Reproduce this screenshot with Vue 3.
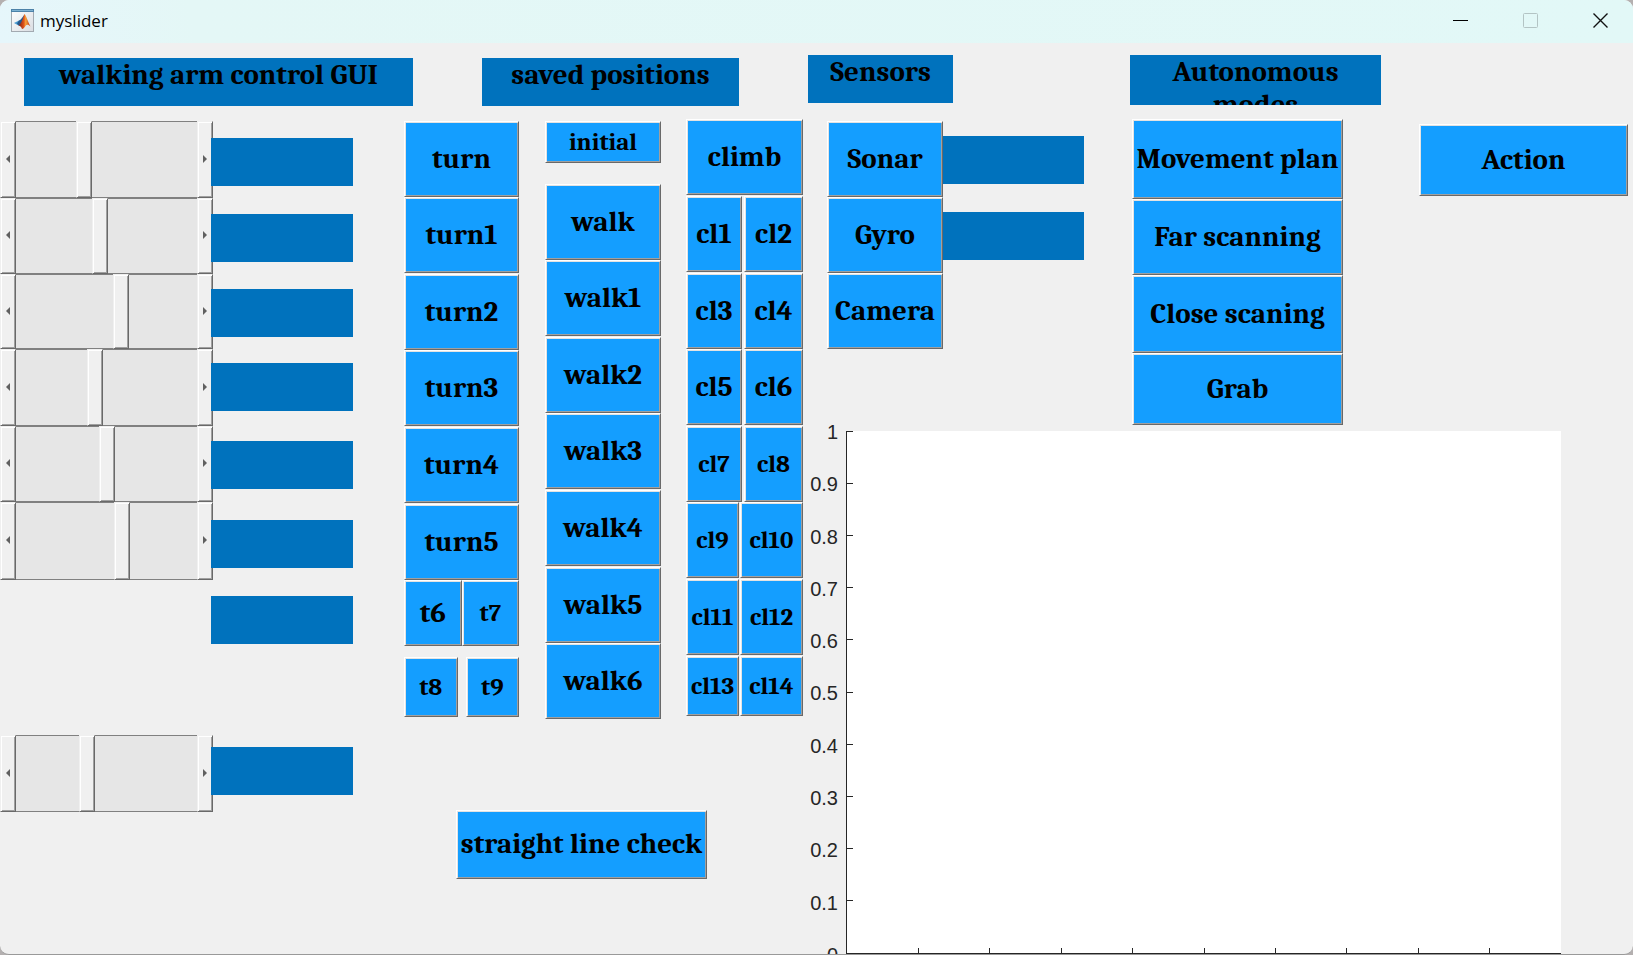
<script setup>
import { reactive } from 'vue'

const sliders = reactive([
  { name: 'Joint 1', value: 0.364 },
  { name: 'Joint 2', value: 0.461 },
  { name: 'Joint 3', value: 0.588 },
  { name: 'Joint 4', value: 0.43 },
  { name: 'Joint 5', value: 0.503 },
  { name: 'Joint 6', value: 0.594 },
  { name: 'Joint 7', value: 0.382 },
])

function nudge(slider, amount) {
  slider.value = Math.min(1, Math.max(0, slider.value + amount))
}

const turns = ['turn', 'turn1', 'turn2', 'turn3', 'turn4', 'turn5']
const walks = ['walk', 'walk1', 'walk2', 'walk3', 'walk4', 'walk5', 'walk6']
const climbs = [
  { left: 'cl1', right: 'cl2', kind: 'wide' },
  { left: 'cl3', right: 'cl4', kind: 'wide' },
  { left: 'cl5', right: 'cl6', kind: 'wide' },
  { left: 'cl7', right: 'cl8', kind: 'wide small' },
  { left: 'cl9', right: 'cl10', kind: 'narrow small' },
  { left: 'cl11', right: 'cl12', kind: 'narrow small' },
  { left: 'cl13', right: 'cl14', kind: 'narrow small' },
]
const modes = ['Movement plan', 'Far scanning', 'Close scaning', 'Grab']
const yLabels = ['1', '0.9', '0.8', '0.7', '0.6', '0.5', '0.4', '0.3', '0.2', '0.1', '0']
</script>

<template>
  <div class="window">
    <header class="titlebar">
      <svg class="logo" viewBox="0 0 23 23" aria-hidden="true">
        <defs>
          <linearGradient id="flame" x1="0" y1="0" x2="1" y2="0">
            <stop offset="0" stop-color="#7c1d10" />
            <stop offset="0.45" stop-color="#e2541b" />
            <stop offset="0.6" stop-color="#f7a23a" />
            <stop offset="1" stop-color="#b92b12" />
          </linearGradient>
          <linearGradient id="paper" x1="0" y1="0" x2="1" y2="1">
            <stop offset="0" stop-color="#ffffff" />
            <stop offset="1" stop-color="#d9dde2" />
          </linearGradient>
        </defs>
        <rect x="0.5" y="0.5" width="22" height="22" fill="url(#paper)" stroke="#a3aab1" />
        <rect x="0" y="0" width="23" height="3" fill="#4d82a8" />
        <rect x="1" y="1" width="21" height="1" fill="#7fb2d2" />
        <path d="M3 14 L8 11.5 L10 13.5 L7.500 16.500 Z" fill="#4a9bd0" />
        <path d="M8 11.500 C10 11 11.500 8 13.500 5.500 L12.500 12 L9.500 15.500 L7.500 16.500 L6 14.500 Z" fill="#26588c" />
        <path d="M13.500 5 C15 6 17 13 19.500 17.500 C17.500 15.500 16 15 14.500 17 C13.500 18.500 12.500 20 11 20 C10.500 18 9.500 17 7.500 16.500 C11 14.500 12 8 13.500 5 Z" fill="url(#flame)" />
      </svg>
      <h1 class="caption">myslider</h1>
      <div class="controls">
        <button type="button" class="control" aria-label="Minimize">
          <svg viewBox="0 0 15 15"><path d="M0 7.500H15" stroke="#000" fill="none" /></svg>
        </button>
        <button type="button" class="control" aria-label="Maximize" disabled>
          <svg viewBox="0 0 15 15"><rect x="0.5" y="0.5" width="14" height="14" rx="1" stroke="#b3c4c4" fill="none" /></svg>
        </button>
        <button type="button" class="control" aria-label="Close">
          <svg viewBox="0 0 15 15"><path d="M0.500 0.500L14.500 14.500M14.500 0.500L0.500 14.500" stroke="#111" stroke-width="1.400" fill="none" /></svg>
        </button>
      </div>
    </header>

    <main class="figure">
      <section class="left">
        <div class="heads">
          <h2 class="head arm-head">walking arm control GUI</h2>
          <h2 class="head saved-head">saved positions</h2>
        </div>
        <div class="body">
          <div class="sliders">
            <div v-for="(s, i) in sliders" :key="s.name" class="slider" :class="{ last: i === 6 }">
              <button type="button" class="arrow" :aria-label="s.name + ' down'" @click="nudge(s, -0.01)">
                <svg viewBox="0 0 4 8"><path d="M4 0V8L0 4Z" fill="#606060" /></svg>
              </button>
              <input v-model.number="s.value" type="range" min="0" max="1" step="any" :aria-label="s.name" />
              <button type="button" class="arrow" :aria-label="s.name + ' up'" @click="nudge(s, 0.01)">
                <svg viewBox="0 0 4 8"><path d="M0 0V8L4 4Z" fill="#606060" /></svg>
              </button>
            </div>
          </div>
          <div class="readouts">
            <output v-for="n in 8" :key="n" class="field"></output>
          </div>
          <div class="positions">
            <div class="banks">
              <div class="turns">
                <button v-for="t in turns" :key="t" type="button" class="push">{{ t }}</button>
                <div class="pair joined">
                  <button type="button" class="push">t6</button>
                  <button type="button" class="push small">t7</button>
                </div>
                <div class="pair spaced">
                  <button type="button" class="push small">t8</button>
                  <button type="button" class="push small">t9</button>
                </div>
              </div>
              <div class="walks">
                <button type="button" class="push small initial">initial</button>
                <button v-for="w in walks" :key="w" type="button" class="push">{{ w }}</button>
              </div>
              <div class="climbs">
                <button type="button" class="push">climb</button>
                <div v-for="c in climbs" :key="c.left" class="climb-row" :class="c.kind">
                  <button type="button" class="push">{{ c.left }}</button>
                  <button type="button" class="push">{{ c.right }}</button>
                </div>
              </div>
            </div>
            <div class="check">
              <button type="button" class="push">straight line check</button>
            </div>
          </div>
        </div>
      </section>

      <section class="right">
        <div class="heads">
          <h2 class="head sensor-head">Sensors</h2>
          <h2 class="head auto-head">Autonomous modes</h2>
        </div>
        <div class="body">
          <div class="sensors">
            <button type="button" class="push">Sonar</button>
            <button type="button" class="push">Gyro</button>
            <button type="button" class="push">Camera</button>
          </div>
          <div class="sensor-fields">
            <output class="field"></output>
            <output class="field"></output>
          </div>
          <div class="modes">
            <button v-for="m in modes" :key="m" type="button" class="push">{{ m }}</button>
          </div>
          <div class="action">
            <button type="button" class="push">Action</button>
          </div>
        </div>
        <div class="chart">
          <ul class="y-labels">
            <li v-for="l in yLabels" :key="l">{{ l }}</li>
          </ul>
          <svg class="plot" aria-label="Empty axes">
            <line v-for="n in 10" :key="'y' + n" x1="0" x2="6" :y1="(n - 1) * 10 + '%'" :y2="(n - 1) * 10 + '%'" />
            <line v-for="n in 9" :key="'x' + n" :x1="n * 10 + '%'" :x2="n * 10 + '%'" y1="99%" y2="100%" />
          </svg>
        </div>
      </section>
    </main>
  </div>
</template>

<style>
html {
  background: #b4b0b0;
}
</style>

<style scoped>
.window {
  box-sizing: border-box;
  display: flex;
  flex-direction: column;
  height: 100vh;
  overflow: hidden;
  border-bottom: 1px solid #999;
  border-radius: 9px;
  background: #f0f0f0;
  color: #000;
}

.titlebar {
  display: flex;
  flex: none;
  align-items: center;
  height: 43px;
  box-sizing: border-box;
  padding: 0 0 2px 11px;
  background: linear-gradient(80deg, #e6f6fb 0%, #e4f7f6 12%, #e2f8f7 100%);
}

.logo {
  width: 23px;
  height: 23px;
}

.caption {
  margin: 0 auto 0 6px;
  font: 400 17px/24px "Open Sans", "Noto Sans", sans-serif;
}

.controls {
  display: flex;
  gap: 5px;
}

.control {
  display: flex;
  align-items: center;
  justify-content: center;
  width: 65px;
  height: 39px;
  padding: 0;
  border: 0;
  background: none;
}

.control svg {
  width: 15px;
  height: 15px;
}

.figure {
  display: grid;
  flex: 1;
  min-height: 0;
  grid-template-columns: minmax(0, 808fr) minmax(0, 825fr);
  font-family: Cambria, "Liberation Serif", serif;
}

.heads,
.body {
  display: grid;
}

.head {
  height: 48px;
  margin: 0;
  overflow: hidden;
  background: #0072bd;
  font-size: 29px;
  font-weight: 700;
  line-height: 33px;
  text-align: center;
}

.field {
  display: block;
  height: 48px;
  background: #0072bd;
}

.push {
  box-sizing: border-box;
  width: 100%;
  min-width: 0;
  height: 76px;
  padding: 0 0 2px;
  border: 1px solid;
  border-color: #fff #696969 #696969 #fff;
  background: #149eff;
  box-shadow: inset 1px 1px #e3e3e3, inset -1px -1px #a0a0a0;
  color: #000;
  font: 700 29px/33px Cambria, "Liberation Serif", serif;
  white-space: nowrap;
}

.small,
.small .push {
  font-size: 25px;
}

.left .heads {
  grid-template-columns: 24fr 389fr 69fr 257fr 69fr;
  padding: 15px 0 13px;
}

.arm-head {
  grid-column: 2;
}

.saved-head {
  grid-column: 4;
}

.left .body {
  grid-template-columns: 211fr 2fr 140fr 51fr 399fr 5fr;
  align-items: start;
}

.sliders {
  display: grid;
  grid-row: 1;
  grid-column: 1 / 3;
  grid-template-rows: 77px 76px 75px 77px 76px 78px 155px 77px;
  padding-top: 2px;
}

.slider {
  display: grid;
  grid-template-columns: 16px minmax(0, 1fr) 16px;
}

.slider.last {
  grid-row: 8;
}

.arrow {
  display: flex;
  align-items: center;
  justify-content: center;
  padding: 0 0 2px;
  border: 1px solid;
  border-color: #f0f0f0 #696969 #696969 #f0f0f0;
  background: #f0f0f0;
  box-shadow: inset 1px 1px #fff, inset -1px -1px #a0a0a0;
}

.arrow svg {
  width: 4px;
  height: 8px;
}

input[type="range"] {
  box-sizing: border-box;
  width: 100%;
  height: 100%;
  margin: 0;
  appearance: none;
  background: linear-gradient(#808080 1px, #e6e6e6 1px, #e6e6e6 calc(100% - 1px), #808080 calc(100% - 1px));
}

input[type="range"]::-webkit-slider-runnable-track {
  height: 100%;
}

input[type="range"]::-webkit-slider-thumb {
  box-sizing: border-box;
  width: 16px;
  height: 100%;
  appearance: none;
  border: 1px solid;
  border-color: #f0f0f0 #696969 #696969 #f0f0f0;
  border-radius: 0;
  background: #f0f0f0;
  box-shadow: inset 1px 1px #fff, inset -1px -1px #a0a0a0;
}

.readouts {
  z-index: 1;
  display: grid;
  grid-row: 1;
  grid-column: 2 / 4;
  grid-template-rows: 76px 75px 74px 78px 79px 76px 151px 48px;
  padding-top: 19px;
}

.positions {
  grid-row: 1;
  grid-column: 5;
}

.banks {
  display: grid;
  grid-template-columns: 115fr 26fr 116fr 25fr 117fr;
}

.turns,
.walks,
.climbs {
  display: grid;
  align-content: start;
}

.turns {
  grid-column: 1;
  grid-template-rows: 76px 77px 76px 77px 77px 76px 77px 60px;
  padding-top: 2px;
}

.walks {
  grid-column: 3;
  grid-template-rows: 63px 76px 77px 76px 77px 77px 76px 76px;
  padding-top: 2px;
}

.climbs {
  grid-column: 5;
  grid-template-rows: 77px 77px 76px 77px 76px 77px 77px 60px;
}

.walks .initial {
  height: 42px;
}

.pair {
  display: grid;
  grid-template-columns: 1fr 1fr;
}

.joined .push {
  height: 66px;
}

.spaced {
  column-gap: 8px;
}

.spaced .push,
.climb-row:last-child .push {
  height: 60px;
}

.climb-row {
  display: grid;
}

.wide {
  grid-template-columns: 56fr 59fr;
  column-gap: 2px;
}

.narrow {
  grid-template-columns: 53fr 63fr;
  column-gap: 1px;
}

.check {
  display: grid;
  grid-template-columns: 52fr 251fr 96fr;
  padding-top: 91px;
}

.check .push {
  grid-column: 2;
  height: 69px;
}

.right {
  display: flex;
  flex-direction: column;
  min-height: 0;
}

.right .heads {
  grid-template-columns: 145fr 177fr 251fr 252fr;
  padding: 12px 0 14px;
}

.auto-head {
  grid-column: 3;
  height: 50px;
  box-sizing: border-box;
  padding: 0 24px;
}

.right .body {
  grid-template-columns: 19fr 116fr 141fr 48fr 211fr 76fr 209fr 5fr;
  align-items: start;
}

.sensors {
  display: grid;
  grid-column: 2;
  padding-top: 2px;
}

.sensor-fields {
  display: grid;
  grid-column: 3;
  row-gap: 28px;
  padding-top: 17px;
}

.modes {
  display: grid;
  grid-column: 5;
  grid-template-rows: 80px 76px 78px 72px;
}

.modes .push {
  height: 100%;
}

.action {
  grid-column: 7;
  padding-top: 5px;
}

.action .push {
  height: 72px;
}

.chart {
  display: grid;
  flex: 1;
  min-height: 0;
  grid-template-columns: 38fr 715fr 72fr;
  margin-top: 6px;
}

.y-labels {
  display: flex;
  flex-direction: column;
  justify-content: space-between;
  margin: -10px 0 -12px;
  padding: 0 8px 0 0;
  color: #262626;
  font: 20px/22px "Liberation Sans", Arial, sans-serif;
  list-style: none;
  text-align: right;
}

.plot {
  box-sizing: border-box;
  width: 100%;
  height: 100%;
  overflow: visible;
  border: solid #262626;
  border-width: 0 0 1px 1px;
  background: #fff;
}

.plot line {
  stroke: #262626;
  shape-rendering: crispEdges;
}
</style>
